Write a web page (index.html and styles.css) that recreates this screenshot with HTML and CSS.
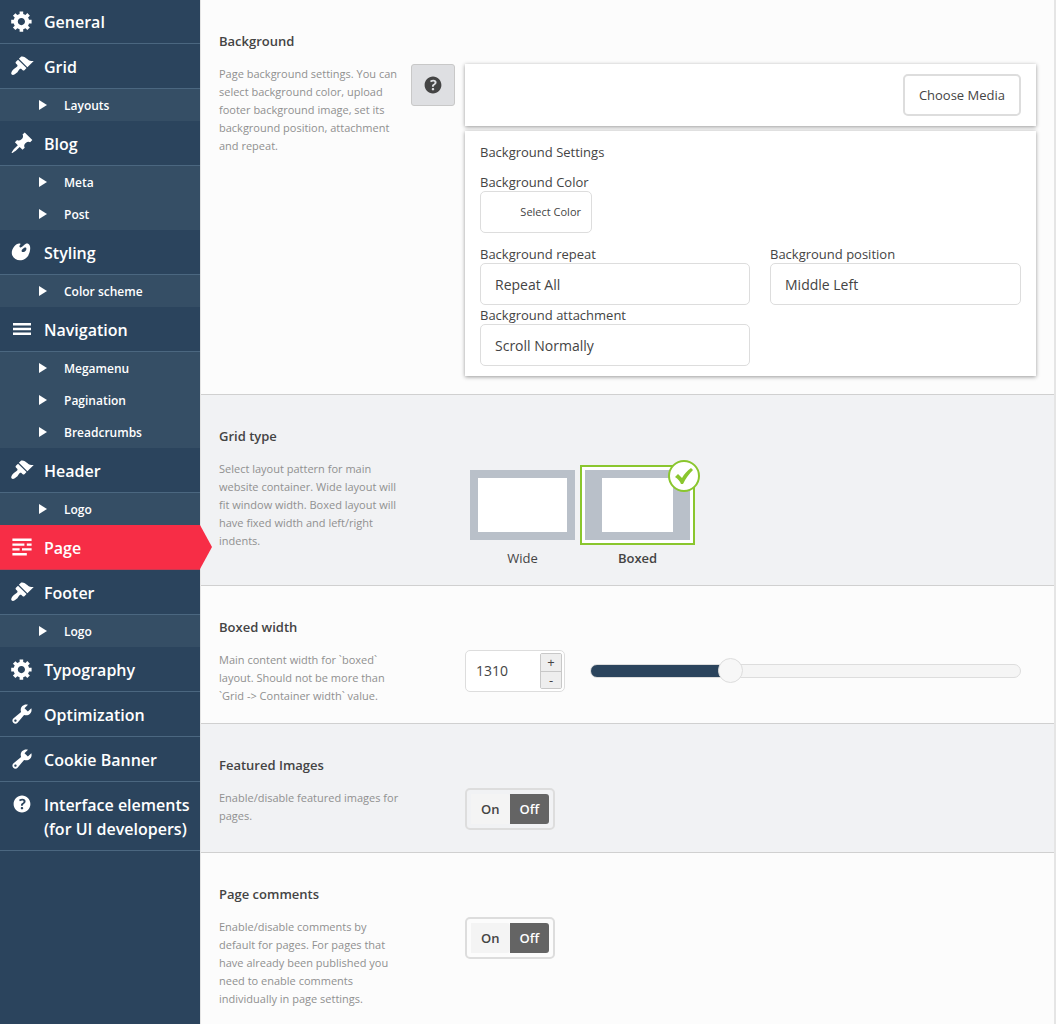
FILE: index.html
```html
<!DOCTYPE html>
<html lang="en">
<head>
<meta charset="utf-8">
<meta name="viewport" content="width=device-width, initial-scale=1">
<title>Page settings</title>
<link rel="stylesheet" href="styles.css">
</head>
<body>
<svg class="sprite" aria-hidden="true">
  <symbol id="gear" viewBox="0 0 20 20"><path d="M18 12h-2.180c-.17.7-.44 1.350-.81 1.930l1.540 1.540-2.100 2.100-1.540-1.540c-.58.36-1.230.63-1.910.79V19H8v-2.180c-.68-.16-1.330-.43-1.910-.79l-1.540 1.540-2.120-2.120 1.540-1.540c-.36-.58-.63-1.230-.79-1.910H1V9.030h2.170c.16-.7.44-1.350.8-1.940L2.430 5.550l2.100-2.100 1.540 1.540c.58-.37 1.240-.64 1.930-.81V2h3v2.180c.68.16 1.330.43 1.910.79l1.540-1.540 2.120 2.120-1.540 1.540c.36.59.64 1.240.8 1.940H18V12zm-8.500 1.500c1.660 0 3-1.340 3-3s-1.340-3-3-3-3 1.340-3 3 1.340 3 3 3z"/></symbol>
  <symbol id="brush" viewBox="0 0 20 20"><path d="M14.480 11.060L7.410 3.990l1.500-1.500c.5-.56 2.300-.47 3.510.32 1.210.8 1.430 1.280 2.910 2.100 1.180.64 2.450 1.260 4.450.85zm-.71.71L6.700 4.700 4.930 6.470c-.39.39-.39 1.020 0 1.410l1.060 1.060c.39.39.39 1.030 0 1.420-.6.6-1.430 1.110-2.210 1.690-.35.26-.7.53-1.010.84C1.430 14.230.4 16.080 1.400 17.070c.99 1 2.840-.03 4.180-1.360.31-.31.58-.66.85-1.020.57-.78 1.080-1.610 1.690-2.210.39-.39 1.020-.39 1.410 0l1.060 1.060c.39.39 1.020.39 1.410 0z"/></symbol>
  <symbol id="pin" viewBox="0 0 20 20"><path d="M10.440 3.020l1.820-1.820 6.360 6.350-1.830 1.820c-1.050-.68-2.480-.57-3.410.36l-.75.75c-.92.93-1.040 2.350-.35 3.410l-1.830 1.820-2.410-2.410-2.800 2.790c-.42.42-3.380 2.710-3.800 2.290s1.860-3.390 2.280-3.810l2.790-2.790L4.100 9.360l1.830-1.820c1.050.69 2.480.57 3.400-.36l.75-.75c.93-.92 1.050-2.350.36-3.410z"/></symbol>
  <symbol id="palette" viewBox="0 0 20 20"><path d="M8.550 3.060c1.010.34-1.950 2.010-.1 3.130 1.040.63 3.310-2.220 4.450-2.860.97-.54 2.670-.65 3.530 1.230 1.090 2.380.14 8.570-3.790 11.060-3.970 2.500-8.970 1.230-10.700-2.660-2.010-4.530 3.120-11.090 6.610-9.900zm1.210 6.450c.73 1.640 4.700-.5 3.790-2.800-.59-1.490-4.480 1.250-3.790 2.800z"/></symbol>
  <symbol id="bars" viewBox="0 0 20 20"><path d="M17.500 7V5h-15v2h15zm0 4V9h-15v2h15zm0 4v-2h-15v2h15z"/></symbol>
  <symbol id="text" viewBox="0 0 20 20"><path d="M18 3v2H2V3h16zm-6 4v2H2V7h10zm6 0v2h-4V7h4zM8 11v2H2v-2h6zm10 0v2h-8v-2h8zm-4 4v2H2v-2h12z"/></symbol>
  <symbol id="wrench" viewBox="0 0 20 20"><path d="M16.680 9.770c-1.340 1.340-3.300 1.670-4.950.99l-5.410 6.520c-.99.99-2.590.99-3.580 0s-.99-2.590 0-3.570l6.520-5.420c-.68-1.650-.35-3.610.99-4.950 1.280-1.280 3.120-1.620 4.720-1.060l-2.890 2.890 2.820 2.820 2.860-2.870c.53 1.580.18 3.390-1.080 4.650zM3.810 16.210c.4.39 1.040.39 1.430 0 .4-.4.4-1.040 0-1.430-.39-.4-1.030-.4-1.430 0-.39.39-.39 1.030 0 1.430z"/></symbol>
  <symbol id="help" viewBox="0 0 20 20"><path d="M17 10c0-3.870-3.140-7-7-7-3.870 0-7 3.130-7 7s3.130 7 7 7c3.860 0 7-3.130 7-7zm-6.300 1.480H9.140v-.43c0-.38.08-.7.24-.98s.46-.57.88-.89c.41-.29.68-.53.81-.71.14-.18.2-.39.2-.62 0-.25-.09-.44-.28-.58-.19-.13-.45-.19-.79-.19-.58 0-1.250.19-2 .57l-.64-1.280c.87-.49 1.800-.74 2.770-.74.81 0 1.450.2 1.920.58.48.39.71.91.71 1.550 0 .43-.09.8-.29 1.110-.19.32-.57.67-1.110 1.060-.38.28-.61.49-.71.63-.1.15-.15.34-.15.57v.35zm-1.470 2.740c-.18-.17-.27-.42-.27-.73 0-.33.08-.58.26-.75s.43-.25.77-.25c.32 0 .57.09.75.26s.27.42.27.74c0 .3-.09.55-.27.72-.18.18-.43.27-.75.27-.33 0-.58-.09-.76-.26z"/></symbol>
  <symbol id="arrow" viewBox="0 0 8 10"><path d="M0 0l8 5-8 5z"/></symbol>
</svg>
<div class="layout">
  <nav class="sidebar" aria-label="Settings">
    <ul class="menu">
      <li><a class="item" href="#general"><svg class="icon"><use href="#gear"/></svg>General</a></li>
      <li><a class="item" href="#grid"><svg class="icon"><use href="#brush"/></svg>Grid</a>
        <ul class="submenu">
          <li><a class="subitem" href="#layouts"><svg class="arrow"><use href="#arrow"/></svg>Layouts</a></li>
        </ul>
      </li>
      <li><a class="item" href="#blog"><svg class="icon"><use href="#pin"/></svg>Blog</a>
        <ul class="submenu">
          <li><a class="subitem" href="#meta"><svg class="arrow"><use href="#arrow"/></svg>Meta</a></li>
          <li><a class="subitem" href="#post"><svg class="arrow"><use href="#arrow"/></svg>Post</a></li>
        </ul>
      </li>
      <li><a class="item" href="#styling"><svg class="icon"><use href="#palette"/></svg>Styling</a>
        <ul class="submenu">
          <li><a class="subitem" href="#color-scheme"><svg class="arrow"><use href="#arrow"/></svg>Color scheme</a></li>
        </ul>
      </li>
      <li><a class="item" href="#navigation"><svg class="icon"><use href="#bars"/></svg>Navigation</a>
        <ul class="submenu">
          <li><a class="subitem" href="#megamenu"><svg class="arrow"><use href="#arrow"/></svg>Megamenu</a></li>
          <li><a class="subitem" href="#pagination"><svg class="arrow"><use href="#arrow"/></svg>Pagination</a></li>
          <li><a class="subitem" href="#breadcrumbs"><svg class="arrow"><use href="#arrow"/></svg>Breadcrumbs</a></li>
        </ul>
      </li>
      <li><a class="item" href="#header"><svg class="icon"><use href="#brush"/></svg>Header</a>
        <ul class="submenu">
          <li><a class="subitem" href="#header-logo"><svg class="arrow"><use href="#arrow"/></svg>Logo</a></li>
        </ul>
      </li>
      <li><a class="item current" href="#page" aria-current="page"><svg class="icon"><use href="#text"/></svg>Page</a></li>
      <li><a class="item" href="#footer"><svg class="icon"><use href="#brush"/></svg>Footer</a>
        <ul class="submenu">
          <li><a class="subitem" href="#footer-logo"><svg class="arrow"><use href="#arrow"/></svg>Logo</a></li>
        </ul>
      </li>
      <li><a class="item" href="#typography"><svg class="icon"><use href="#gear"/></svg>Typography</a></li>
      <li><a class="item" href="#optimization"><svg class="icon"><use href="#wrench"/></svg>Optimization</a></li>
      <li><a class="item" href="#cookie"><svg class="icon"><use href="#wrench"/></svg>Cookie Banner</a></li>
      <li><a class="item" href="#interface"><svg class="icon"><use href="#help"/></svg>Interface elements (for UI developers)</a></li>
    </ul>
  </nav>

  <main class="content">
    <section class="section">
      <h2 class="title">Background</h2>
      <div class="row">
        <p class="desc">Page background settings. You can select background color, upload footer background image, set its background position, attachment and repeat.</p>
        <button class="help" type="button" aria-label="Help"><svg class="icon"><use href="#help"/></svg></button>
        <div class="control panels">
          <div class="panel media">
            <button class="choose" type="button">Choose Media</button>
          </div>
          <div class="panel settings">
            <h3 class="panel-title">Background Settings</h3>
            <div class="field">
              <label class="label" for="bg-color">Background Color</label>
              <button class="color" id="bg-color" type="button">Select Color</button>
            </div>
            <div class="fields">
              <div class="field">
                <label class="label" for="bg-repeat">Background repeat</label>
                <select class="select" id="bg-repeat"><option>Repeat All</option><option>No Repeat</option></select>
              </div>
              <div class="field">
                <label class="label" for="bg-position">Background position</label>
                <select class="select" id="bg-position"><option>Middle Left</option><option>Middle Center</option></select>
              </div>
              <div class="field">
                <label class="label" for="bg-attachment">Background attachment</label>
                <select class="select" id="bg-attachment"><option>Scroll Normally</option><option>Fixed in Place</option></select>
              </div>
            </div>
          </div>
        </div>
      </div>
    </section>

    <section class="section">
      <h2 class="title">Grid type</h2>
      <div class="row">
        <p class="desc">Select layout pattern for main website container. Wide layout will fit window width. Boxed layout will have fixed width and left/right indents.</p>
        <div class="control choices">
          <label class="choice">
            <input class="hidden" type="radio" name="grid-type">
            <span class="frame"><span class="thumb"></span></span>
            <span class="caption">Wide</span>
          </label>
          <label class="choice">
            <input class="hidden" type="radio" name="grid-type" checked>
            <span class="frame"><span class="thumb thumb-boxed"></span>
              <svg class="tick" viewBox="0 0 32 32"><circle cx="16" cy="16" r="15"/><path d="M7 17l3-3 4 4c2-4 5-7 9-10l2 2c-4 4-7 8-10 14h-2c-1-3-3-5-6-7z"/></svg>
            </span>
            <span class="caption">Boxed</span>
          </label>
        </div>
      </div>
    </section>

    <section class="section">
      <h2 class="title" id="width-title">Boxed width</h2>
      <div class="row">
        <p class="desc">Main content width for `boxed` layout. Should not be more than `Grid -&gt; Container width` value.</p>
        <div class="control width">
          <div class="spinner">
            <input class="number" type="text" inputmode="numeric" value="1310" aria-labelledby="width-title">
            <div class="steps">
              <button class="step" type="button" aria-label="Increase">+</button>
              <button class="step" type="button" aria-label="Decrease">-</button>
            </div>
          </div>
          <input class="slider" type="range" min="900" max="2200" value="1310" aria-labelledby="width-title" style="--fill: 32%">
        </div>
      </div>
    </section>

    <section class="section">
      <h2 class="title">Featured Images</h2>
      <div class="row">
        <p class="desc">Enable/disable featured images for pages.</p>
        <div class="control">
          <div class="toggle" role="radiogroup" aria-label="Featured Images">
            <label class="option"><input class="hidden" type="radio" name="featured">On</label>
            <label class="option"><input class="hidden" type="radio" name="featured" checked>Off</label>
          </div>
        </div>
      </div>
    </section>

    <section class="section">
      <h2 class="title">Page comments</h2>
      <div class="row">
        <p class="desc">Enable/disable comments by default for pages. For pages that have already been published you need to enable comments individually in page settings.</p>
        <div class="control">
          <div class="toggle" role="radiogroup" aria-label="Page comments">
            <label class="option"><input class="hidden" type="radio" name="comments">On</label>
            <label class="option"><input class="hidden" type="radio" name="comments" checked>Off</label>
          </div>
        </div>
      </div>
    </section>
  </main>
</div>
</body>
</html>
```
FILE: styles.css
```css
* {
  box-sizing: border-box;
}

body {
  margin: 0;
  background: #f1f1f1;
  color: #444;
  font: 13px/18px "Open Sans", "Noto Sans", sans-serif;
}

button,
input,
select {
  margin: 0;
  font: inherit;
  color: inherit;
}

.sprite {
  display: none;
}

.hidden {
  position: absolute;
  opacity: 0;
}

.layout {
  display: flex;
  min-height: 100vh;
}

/* Sidebar */
.sidebar {
  flex: none;
  width: 200px;
  background: #2b445d;
  color: #fff;
}

.menu,
.submenu {
  margin: 0;
  padding: 0;
  list-style: none;
}

.menu {
  margin-top: -1px;
}

.item {
  position: relative;
  display: flex;
  gap: 10px;
  padding: 11px 8px 9px 10px;
  border-bottom: 1px solid #4b6780;
  color: inherit;
  font-size: 16px;
  font-weight: 600;
  line-height: 24px;
  text-decoration: none;
}

.icon {
  flex: none;
  width: 24px;
  height: 24px;
  fill: currentColor;
}

.item .icon {
  margin-top: -1px;
}

.current {
  background: #f72d46;
  border-color: #c83a52;
}

.current::after {
  content: "";
  position: absolute;
  top: 0;
  left: 100%;
  width: 12px;
  height: 44px;
  background: #f72d46;
  clip-path: polygon(0 0, 100% 50%, 0 100%);
}

.submenu {
  background: #354e65;
}

.subitem {
  display: flex;
  align-items: center;
  gap: 17px;
  height: 32px;
  padding: 2px 8px 0 39px;
  color: inherit;
  font-size: 12px;
  font-weight: 600;
  text-decoration: none;
}

.arrow {
  width: 8px;
  height: 10px;
  margin-bottom: 2px;
  fill: currentColor;
}

/* Sections */
.content {
  flex: 1;
  min-width: 0;
  border-left: 1px solid #e5e5e5;
  border-right: 2px solid #e5e5e5;
  background: #fcfcfc;
}

.section {
  padding: 32px 18px 18px;
  border-bottom: 1px solid #d0d0d0;
}

.section:nth-child(even) {
  background: #f1f2f4;
}

.section:last-child {
  padding-bottom: 0;
  border-bottom: 0;
}

.title {
  margin: 0 0 14px;
  font-size: 13px;
  font-weight: 600;
  line-height: 18px;
}

.row {
  display: grid;
  grid-template-columns: 182px 44px 1fr;
  column-gap: 10px;
  align-items: start;
}

.desc {
  margin: 1px 0 0;
  color: #909090;
  font-size: 11px;
  line-height: 18px;
}

.control {
  grid-column: 3;
  min-width: 0;
}

.help {
  display: grid;
  place-items: center;
  width: 44px;
  height: 42px;
  padding: 0;
  border: 1px solid #c8c8c8;
  border-radius: 3px;
  background: #dedfe2;
}

/* Background panels */
.panels {
  display: grid;
  gap: 5px;
}

.panel {
  background: #fff;
  box-shadow: 0 1px 4px rgba(0, 0, 0, 0.4);
}

.media {
  display: flex;
  justify-content: flex-end;
  padding: 10px 15px;
}

.choose {
  height: 42px;
  padding: 0 14px;
  border: 2px solid #ddd;
  border-radius: 5px;
  background: #fff;
}

.settings {
  padding: 12px 15px 10px;
}

.panel-title {
  margin: 0 0 12px;
  font-size: 13px;
  font-weight: 400;
  line-height: 18px;
}

.label {
  display: block;
}

.color {
  display: block;
  width: 112px;
  height: 42px;
  padding: 0 10px;
  border: 1px solid #ddd;
  border-radius: 5px;
  background: #fff;
  font-size: 11px;
  text-align: right;
}

.fields {
  display: grid;
  grid-template-columns: 270fr 251fr;
  gap: 1px 20px;
  margin-top: 12px;
}

.select {
  display: block;
  appearance: none;
  width: 100%;
  height: 42px;
  padding: 2px 14px 0;
  border: 1px solid #ddd;
  border-radius: 5px;
  background: #fff;
  font-size: 14px;
}

/* Grid type */
.choices {
  display: flex;
  padding-top: 6px;
}

.choice {
  position: relative;
  width: 115px;
  text-align: center;
}

.frame {
  position: relative;
  display: block;
  height: 80px;
  margin-bottom: 4px;
  padding: 3px;
  border: 2px solid transparent;
}

.thumb {
  display: block;
  height: 70px;
  border: 8px solid #b9c0c9;
  background: #fff;
}

.thumb-boxed {
  border-width: 8px 17px;
}

.caption {
  display: block;
}

:checked + .frame {
  border-color: #8ac62e;
  background: #fff;
}

:checked ~ .caption {
  font-weight: 600;
}

.tick {
  position: absolute;
  top: -7px;
  right: -7px;
  width: 32px;
  height: 32px;
  fill: #8ac62e;
}

.tick circle {
  fill: #fff;
  stroke: #8ac62e;
  stroke-width: 2px;
}

/* Boxed width */
.width {
  display: flex;
  align-items: center;
  gap: 25px;
  padding-right: 15px;
}

.spinner {
  flex: none;
  display: flex;
  width: 100px;
  height: 42px;
  padding: 2px;
  border: 1px solid #ddd;
  border-radius: 5px;
  background: #fff;
}

.number {
  flex: 1;
  min-width: 0;
  padding: 0 8px;
  border: 0;
  background: none;
  font-size: 14px;
}

.steps {
  display: grid;
  width: 22px;
  border: 1px solid #c8c8c8;
  border-radius: 2px;
}

.step {
  padding: 0;
  border: 0;
  background: #eee;
  line-height: 16px;
}

.step + .step {
  border-top: 1px solid #c8c8c8;
}

.slider {
  flex: 1;
  min-width: 0;
  appearance: none;
  height: 24px;
  background: none;
}

.slider::-webkit-slider-runnable-track {
  height: 14px;
  border: 1px solid #ddd;
  border-radius: 7px;
  background: linear-gradient(to right, #2b445d var(--fill), #f5f5f5 var(--fill));
}

.slider::-webkit-slider-thumb {
  appearance: none;
  width: 25px;
  height: 25px;
  margin-top: -7px;
  border: 1px solid #ddd;
  border-radius: 50%;
  background: #f7f7f7;
}

/* On/off toggle */
.toggle {
  display: inline-flex;
  margin-bottom: 4px;
  padding: 4px;
  border: 2px solid #ddd;
  border-radius: 5px;
  vertical-align: top;
}

.option {
  padding: 6px 10px;
  border-radius: 0 3px 3px 0;
  background: #f4f4f4;
  font-weight: 600;
}

.option:has(:checked) {
  background: #646464;
  color: #fff;
}
```
